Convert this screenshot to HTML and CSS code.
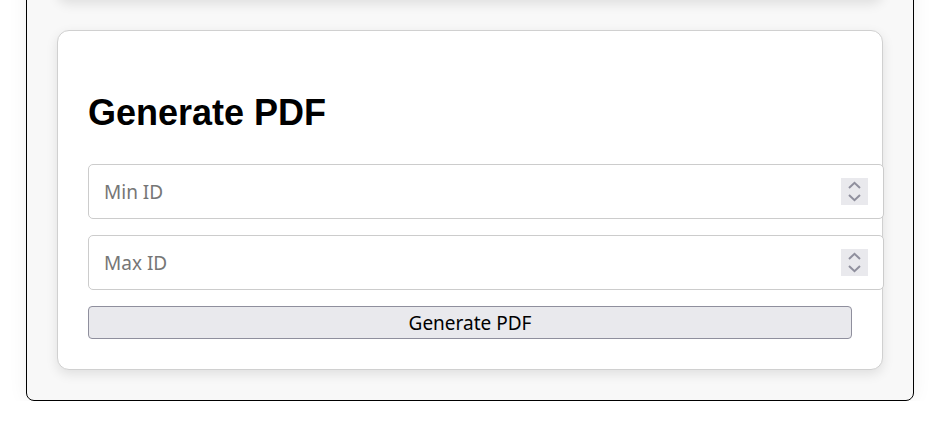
FILE: index.html
```html
<!DOCTYPE html>
<html lang="en">
<head>
<meta charset="utf-8">
<title>Generate PDF</title>
<link rel="stylesheet" href="styles.css">
</head>
<body>
<div class="page">
  <section class="card card-prev"></section>
  <section class="card">
    <h2 class="card-title">Generate PDF</h2>
    <div class="field">
      <input class="num-input" type="text" placeholder="Min ID">
      <span class="spinner" aria-hidden="true">
        <svg width="27" height="27" viewBox="0 0 27 27"><path d="M8 10 L13.5 4.8 L19 10" fill="none" stroke="#8f8f9d" stroke-width="2"/><path d="M8 17 L13.5 22.2 L19 17" fill="none" stroke="#8f8f9d" stroke-width="2"/></svg>
      </span>
    </div>
    <div class="field">
      <input class="num-input" type="text" placeholder="Max ID">
      <span class="spinner" aria-hidden="true">
        <svg width="27" height="27" viewBox="0 0 27 27"><path d="M8 10 L13.5 4.8 L19 10" fill="none" stroke="#8f8f9d" stroke-width="2"/><path d="M8 17 L13.5 22.2 L19 17" fill="none" stroke="#8f8f9d" stroke-width="2"/></svg>
      </span>
    </div>
    <button class="btn" type="button">Generate PDF</button>
  </section>
</div>
</body>
</html>
```
FILE: styles.css
```css
html, body {
  margin: 0;
  padding: 0;
  background: #ffffff;
}

.page {
  box-sizing: border-box;
  width: 888px;
  margin: -231px 0 0 26px;
  padding: 30px;
  background: #f8f8f8;
  border: 1px solid #000;
  border-radius: 8px;
  box-shadow: 0 0 20px rgba(0, 0, 0, 0.06);
  display: flex;
  flex-direction: column;
  gap: 30px;
}

.card {
  box-sizing: border-box;
  background: #fff;
  border: 1px solid #d0d0d0;
  border-radius: 12px;
  padding: 30px;
  box-shadow: 0 4px 12px rgba(0, 0, 0, 0.1);
  display: flex;
  flex-direction: column;
  align-items: flex-start;
}

.card-prev {
  height: 200px;
}

.card-title {
  margin: 31px 0 31px;
  font-family: "Liberation Sans", Arial, sans-serif;
  font-weight: bold;
  font-size: 36px;
  line-height: 41px;
  color: #000;
}

.field {
  position: relative;
  width: calc(100% + 32px);
  margin-bottom: 16px;
}

.num-input {
  box-sizing: border-box;
  display: block;
  width: 100%;
  height: 55px;
  margin: 0;
  padding: 15px;
  border: 1px solid #cccccc;
  border-radius: 5px;
  background: #fff;
  font-family: "Noto Sans", "Open Sans", sans-serif;
  font-size: 19px;
  line-height: 23px;
  color: #000;
  outline: none;
}

.num-input::placeholder {
  color: #767676;
}

.spinner {
  position: absolute;
  right: 16px;
  top: 14px;
  width: 27px;
  height: 27px;
  background: #e9e9ed;
  display: block;
}

.spinner svg {
  display: block;
}

.btn {
  box-sizing: border-box;
  width: 100%;
  height: 33px;
  margin: 0;
  padding: 0 8px;
  background: #e9e9ed;
  border: 1px solid #8f8f9d;
  border-radius: 4px;
  font-family: "Noto Sans", "Open Sans", sans-serif;
  font-size: 19px;
  color: #000;
}
```
